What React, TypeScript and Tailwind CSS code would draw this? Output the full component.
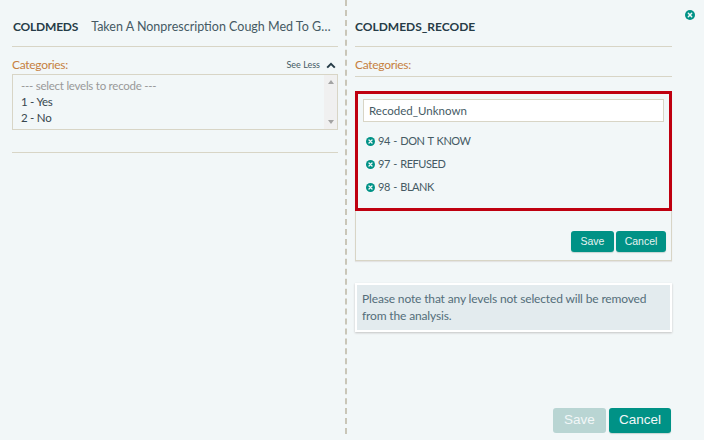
const LEVELS = ["94 - DON T KNOW", "97 - REFUSED", "98 - BLANK"];

function XCircle({ size }: { size: number }) {
  return (
    <svg width={size} height={size} viewBox="0 0 12 12" className="shrink-0">
      <circle cx="6" cy="6" r="6" fill="#009286" />
      <path d="M4 4l4 4M8 4l-4 4" stroke="#f1f7f8" strokeWidth="1.8" strokeLinecap="round" />
    </svg>
  );
}

export default function App() {
  return (
    <div className="relative flex h-[440px] w-[704px] overflow-hidden bg-[#f2f7f8] font-['Lato','Noto_Sans',sans-serif] text-[#37474f]">
      {/* Left column */}
      <div className="h-[434px] w-[347px] shrink-0 border-r-2 border-dashed border-[#c9c6b8] pl-3 pr-[7px]">
        <div className="flex h-[47px] items-center gap-[13px] border-b border-[#d8d5c6] pl-px pt-[8px]">
          <span className="text-[12px] font-bold tracking-[-0.2px] text-[#263c47]">COLDMEDS</span>
          <span className="whitespace-nowrap text-[12.5px] text-[#455a64]">Taken A Nonprescription Cough Med To G…</span>
        </div>
        <div className="mt-[9px] flex h-[18px] items-center justify-between pr-[2px]">
          <span className="text-[12px] tracking-[-0.3px] text-[#c67f3f]">Categories:</span>
          <span className="flex items-center gap-[6px] text-[9px] text-[#455a64]">
            See Less
            <svg width="10" height="7" viewBox="0 0 10 7">
              <path d="M1.2 5.6L5 1.8l3.8 3.8" fill="none" stroke="#263c47" strokeWidth="2" />
            </svg>
          </span>
        </div>
        <div className="flex h-[56px] border border-[#d8d5c6] pl-2 text-[11.5px] leading-4 tracking-[-0.25px]">
          <div className="flex-1 pt-[3px]">
            <div className="text-[#999]">--- select levels to recode ---</div>
            <div>1 - Yes</div>
            <div>2 - No</div>
          </div>
          <div className="flex w-[13px] flex-col items-center justify-between bg-[#f0f0f0] py-[5px]">
            <span className="h-0 w-0 border-x-[3px] border-b-[4px] border-x-transparent border-b-[#a3a3a3]" />
            <span className="h-0 w-0 border-x-[3px] border-t-[4px] border-x-transparent border-t-[#a3a3a3]" />
          </div>
        </div>
        <div className="mt-[22px] border-b border-[#d8d5c6]" />
      </div>

      {/* Right column */}
      <div className="ml-2 flex h-[434px] w-[317px] flex-col">
        <div className="flex h-[47px] items-center border-b border-[#d8d5c6] pt-[8px] text-[12px] font-bold text-[#263c47]">
          COLDMEDS_RECODE
        </div>
        <div className="flex h-[30px] items-center border-b border-[#d8d5c6] pt-[6px] text-[12px] tracking-[-0.3px] text-[#c67f3f]">
          Categories:
        </div>
        <div className="mt-[14px] h-[170px] border border-t-0 border-[#d8d5c6] shadow-[0_1px_1px_#e3e3e3]">
          <div className="-mx-px h-[120px] border-[3px] border-[#bf0010] px-[5px] pt-[5px]">
            <div className="flex h-[23px] items-center border border-[#d8d5c6] bg-white px-[5px] pt-px text-[11.5px] text-[#455a64]">
              Recoded_Unknown
            </div>
            <ul className="mt-[11px] flex flex-col gap-[7px] text-[11px] tracking-[-0.45px] [word-spacing:1px] text-[#455a64]">
              {LEVELS.map((level) => (
                <li key={level} className="flex h-4 items-center gap-[3px] pl-[3px]">
                  <XCircle size={9} />
                  {level}
                </li>
              ))}
            </ul>
          </div>
          <div className="mt-[20px] flex justify-end gap-[2px] pr-[5px] font-['Liberation_Sans',sans-serif] text-[10.5px] text-[#e6f3f1]">
            <button className="h-[21px] w-[43px] rounded-[3px] bg-[#009286] shadow-[0_1px_1px_#c5d5d3]">Save</button>
            <button className="h-[21px] w-[50px] rounded-[3px] bg-[#009286] shadow-[0_1px_1px_#c5d5d3]">Cancel</button>
          </div>
        </div>
        <div className="mt-[22px] h-[49px] border-2 border-white bg-[#e3ebee] px-[5px] pt-[5px] text-[12px] leading-[17px] tracking-[-0.15px] text-[#546e7a] shadow-[0_1px_2px_#c4c4c4]">
          Please note that any levels not selected will be removed from the analysis.
        </div>
        <div className="mt-auto flex justify-end gap-[3px] pb-px pr-px font-['Liberation_Sans',sans-serif] text-[13.5px] text-[#f2f7f8]">
          <button className="h-[25px] w-[53px] rounded-[3px] bg-[#b9d5d3]">Save</button>
          <button className="h-[25px] w-[62px] rounded-[3px] bg-[#009286] shadow-[0_1px_1px_#c5d5d3]">Cancel</button>
        </div>
      </div>

      {/* Close */}
      <div className="absolute right-[9px] top-[10px]">
        <XCircle size={10} />
      </div>
    </div>
  );
}
